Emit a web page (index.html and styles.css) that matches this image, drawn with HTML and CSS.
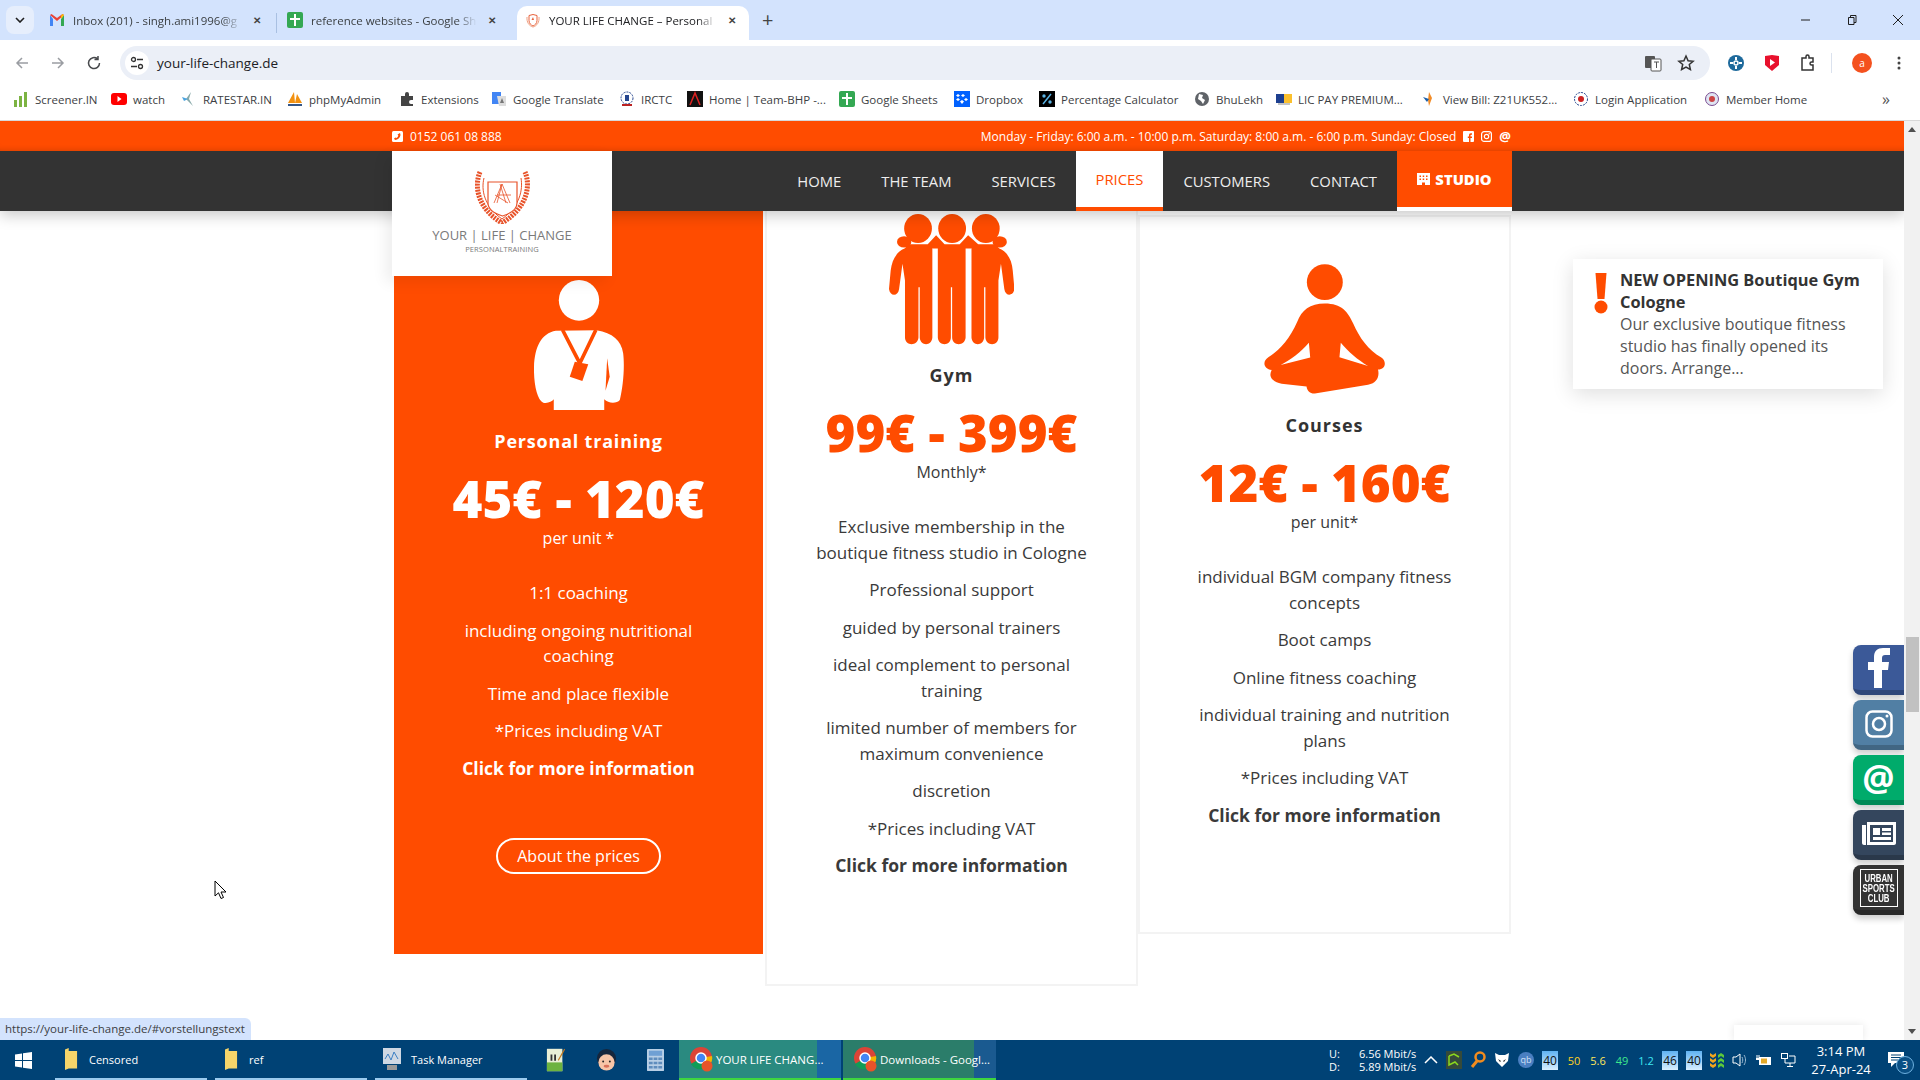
FILE: index.html
```html
<!DOCTYPE html>
<html lang="en">
<head>
<meta charset="utf-8">
<title>YOUR LIFE CHANGE</title>
<link rel="stylesheet" href="styles.css">
</head>
<body>
<div class="tabstrip">
  <div class="tabmenu"><svg width="10" height="6" viewBox="0 0 10 6"><path d="M1 1l4 4 4-4" fill="none" stroke="#1f1f1f" stroke-width="1.6"/></svg></div>
  <div class="tab tab-a"><svg class="fav" viewBox="0 0 16 16"><path d="M1 3v11h3V7z" fill="#4285f4"/><path d="M15 3v11h-3V7z" fill="#34a853"/><path d="M1 3l7 6 7-6-1.500-1L8 6 2.500 2z" fill="#ea4335"/><path d="M12 7l3-4-1.500-1L12 3.500z" fill="#fbbc04"/></svg><span class="tabtext">Inbox (201) - singh.ami1996@g</span><span class="tabx">✕</span></div>
  <div class="tabsep"></div>
  <div class="tab tab-b"><svg class="fav" viewBox="0 0 16 16"><rect width="16" height="16" rx="2" fill="#34a853"/><path d="M7 2h2v4h4v2H9v6H7V8H3V6h4z" fill="#fff"/></svg><span class="tabtext">reference websites - Google Sh</span><span class="tabx">✕</span></div>
  <div class="tab tab-active"><svg class="fav" viewBox="0 0 16 16"><path d="M8 2.500l4 1v5c0 3-2 4.500-4 5.500-2-1-4-2.500-4-5.500v-5z" fill="none" stroke="#e8623c" stroke-width="1"/><path d="M2 5c-.500 5 2 9 6 10 4-1 6.500-5 6-10" fill="none" stroke="#f0a080" stroke-width="1"/><path d="M8 5l1 3H6.500z" fill="#e8623c"/></svg><span class="tabtext">YOUR LIFE CHANGE – Personal</span><span class="tabx">✕</span></div>
  <div class="newtab">+</div>
  <div class="winctl">
    <svg width="12" height="12" viewBox="0 0 12 12"><path d="M1 6h9" stroke="#1f1f1f"/></svg>
    <svg width="12" height="12" viewBox="0 0 12 12"><path d="M2.500 3.500h5.500v7H2.500zM4.500 3.500V1.500h5.500v7H8" fill="none" stroke="#1f1f1f"/></svg>
    <svg width="12" height="12" viewBox="0 0 12 12"><path d="M1 1l10 10M11 1L1 11" stroke="#1f1f1f"/></svg>
  </div>
</div>
<div class="toolbar">
  <svg class="navbtn" viewBox="0 0 16 16"><path d="M14 8H3M8 3L3 8l5 5" fill="none" stroke="#9a9da2" stroke-width="1.500"/></svg>
  <svg class="navbtn" viewBox="0 0 16 16"><path d="M2 8h11M8 3l5 5-5 5" fill="none" stroke="#9a9da2" stroke-width="1.500"/></svg>
  <svg class="navbtn" viewBox="0 0 16 16"><path d="M13.500 8A5.500 5.500 0 1 1 11.500 3.800M12 1v3.500H8.500" fill="none" stroke="#47494c" stroke-width="1.500"/></svg>
  <div class="omnibox">
    <span class="tune"><svg width="14" height="14" viewBox="0 0 14 14"><circle cx="3.500" cy="3.500" r="2" fill="none" stroke="#333" stroke-width="1.300"/><path d="M7 3.500h6M1 10.500h6" stroke="#333" stroke-width="1.300"/><circle cx="10.500" cy="10.500" r="2" fill="none" stroke="#333" stroke-width="1.300"/></svg></span>
    <span class="url">your-life-change.de</span>
    <svg class="omni-ico" viewBox="0 0 18 18"><rect x="1" y="2" width="10" height="12" rx="1" fill="#555"/><rect x="7" y="5" width="10" height="12" rx="1" fill="#fff" stroke="#555"/><path d="M10 8h5M12.500 8v6" stroke="#555"/></svg>
    <svg class="omni-ico omni-star" viewBox="0 0 18 18"><path d="M9 2l2.100 4.700 5 .500-3.800 3.300 1.100 5L9 13l-4.400 2.500 1.100-5L1.900 7.200l5-.500z" fill="none" stroke="#333" stroke-width="1.500"/></svg>
  </div>
  <div class="tools">
    <svg class="tool" viewBox="0 0 18 18"><circle cx="9" cy="9" r="8" fill="#1e6a9c"/><circle cx="9" cy="9" r="2" fill="#1e6a9c" stroke="#fff" stroke-width="1.500"/><path d="M9 3v3M9 12v3M3 9h3M12 9h3" stroke="#fff" stroke-width="2"/></svg>
    <svg class="tool" viewBox="0 0 18 18"><path d="M2 2l7-1 7 1v9l-7 6-7-6z" fill="#e8112d"/><path d="M7 5l5 3.500L7 12z" fill="#fff"/></svg>
    <svg class="tool" viewBox="0 0 18 18"><path d="M3 4h4V2.500a1.500 1.500 0 0 1 3 0V4h4v4h-1.500a1.500 1.500 0 0 0 0 3H14v5H3z" fill="none" stroke="#333" stroke-width="1.500"/></svg>
    <span class="toolsep"></span>
    <span class="avatar">a</span>
    <svg class="kebab" viewBox="0 0 4 16"><circle cx="2" cy="3" r="1.500" fill="#444"/><circle cx="2" cy="8" r="1.500" fill="#444"/><circle cx="2" cy="13" r="1.500" fill="#444"/></svg>
  </div>
</div>
<div class="bookmarks">
  <span class="bm"><svg class="fav" viewBox="0 0 16 16"><path d="M1 9h3v7H1zM6 5h3v11H6zM11 1h3v15h-3z" fill="#7cb342"/></svg>Screener.IN</span>
  <span class="bm"><svg class="fav" viewBox="0 0 16 16"><rect y="2" width="16" height="12" rx="3" fill="#f00"/><path d="M6.500 5l4 3-4 3z" fill="#fff"/></svg>watch</span>
  <span class="bm"><svg class="fav" viewBox="0 0 16 16"><path d="M10 1L5 8l7 7-4-7z" fill="#8aa"/><path d="M1 6l6 2-4 2z" fill="#4aa3df"/></svg>RATESTAR.IN</span>
  <span class="bm"><svg class="fav" viewBox="0 0 16 16"><path d="M1 12L7 1l1 11zM8 12L10 3l5 9z" fill="#f29111"/><path d="M1 13h14v2H1z" fill="#34578a"/></svg>phpMyAdmin</span>
  <span class="bm"><svg class="fav" viewBox="0 0 16 16"><path d="M2 5h4V3a2 2 0 0 1 4 0v2h4v4h-2a2 2 0 0 0 0 4h2v2H2z" fill="#444"/></svg>Extensions</span>
  <span class="bm"><svg class="fav" viewBox="0 0 16 16"><path d="M1 1h9v12H1z" fill="#4285f4"/><path d="M6 5h9v10H8z" fill="#ddd"/><path d="M11 7l2 5h-4z" fill="#777"/></svg>Google Translate</span>
  <span class="bm"><svg class="fav" viewBox="0 0 16 16"><circle cx="8" cy="7" r="6" fill="none" stroke="#26468e" stroke-dasharray="2 1"/><path d="M6 4h4v6H6z" fill="#26468e"/><path d="M3 14h10" stroke="#b22" stroke-width="2"/></svg>IRCTC</span>
  <span class="bm"><svg class="fav" viewBox="0 0 16 16"><rect width="16" height="16" fill="#111"/><path d="M3 14L8 2l5 12" fill="none" stroke="#d22" stroke-width="1.500"/></svg>Home | Team-BHP -...</span>
  <span class="bm"><svg class="fav" viewBox="0 0 16 16"><rect width="16" height="16" rx="2" fill="#34a853"/><path d="M7 2h2v4h4v2H9v6H7V8H3V6h4z" fill="#fff"/></svg>Google Sheets</span>
  <span class="bm"><svg class="fav" viewBox="0 0 16 16"><rect width="16" height="16" fill="#0061fe"/><path d="M4 3l2 1.500L4 6 2 4.500zM9 3l2 1.500L9 6 7 4.500zM4 7l2 1.500L4 10 2 8.500zM12 7l2 1.500-2 1.500-2-1.500zM8 9l2 1.500L8 13l-2-2.500z" fill="#fff"/></svg>Dropbox</span>
  <span class="bm"><svg class="fav" viewBox="0 0 16 16"><rect width="16" height="16" fill="#000"/><path d="M12 3L4 13" stroke="#5ab4e5" stroke-width="1.500"/><circle cx="5" cy="5" r="1.700" fill="#5ab4e5"/><circle cx="11" cy="11" r="1.700" fill="#5ab4e5"/></svg>Percentage Calculator</span>
  <span class="bm"><svg class="fav" viewBox="0 0 16 16"><circle cx="8" cy="8" r="7" fill="#5f6368"/><path d="M5 3l4 1-1 3 3 2-2 4-2-3-3-2z" fill="#fff"/></svg>BhuLekh</span>
  <span class="bm"><svg class="fav" viewBox="0 0 16 16"><rect y="3" width="16" height="9" fill="#1d3f8f"/><rect x="8" y="3" width="8" height="9" fill="#fbc02d"/><path d="M2 13h12" stroke="#888"/></svg>LIC PAY PREMIUM...</span>
  <span class="bm"><svg class="fav" viewBox="0 0 16 16"><path d="M8 1l3 6-3 8-1-6z" fill="#f28c28"/><path d="M2 6l6 2-2 3z" fill="#1c5fa8"/></svg>View Bill: Z21UK552...</span>
  <span class="bm"><svg class="fav" viewBox="0 0 16 16"><circle cx="8" cy="8" r="6.500" fill="#fff" stroke="#26468e" stroke-dasharray="2 1"/><circle cx="8" cy="8" r="3" fill="#c22"/></svg>Login Application</span>
  <span class="bm"><svg class="fav" viewBox="0 0 16 16"><circle cx="8" cy="8" r="6.500" fill="#dfe5f3" stroke="#7a4b8f"/><circle cx="8" cy="8" r="3" fill="#c44"/></svg>Member Home</span>
  <span class="bm-more">»</span>
</div>

<div class="viewport">
  <div class="page">
    <main class="pricing">
      <section class="card card-orange">
        <svg class="icon icon-pt" viewBox="363 480 214 390" preserveAspectRatio="none">
          <ellipse cx="470" cy="541" rx="48" ry="61" fill="#fff"/>
          <path d="M415 632C380 640 365 680 363 740C362 790 370 840 385 848C395 851 405 846 410 838V870H530V838C540 851 560 851 567 840C575 800 579 740 575 700C570 660 550 640 512 631Z" fill="#fff"/>
          <path d="M431 630L472 730M510 630L472 730" stroke="#ff4c00" stroke-width="9" fill="none"/>
          <path d="M460 725L492 733L478 783L448 770Z" fill="#ff4c00"/>
          <path d="M537 715L543 770L533 812Z" fill="#ff4c00"/>
        </svg>
        <h2 class="title title-pt">Personal training</h2>
        <div class="price">45€ - 120€</div>
        <div class="unit">per unit *</div>
        <p>1:1 coaching</p>
        <p>including ongoing nutritional coaching</p>
        <p>Time and place flexible</p>
        <p>*Prices including VAT</p>
        <p class="more">Click for more information</p>
        <a class="btn" href="#">About the prices</a>
      </section>
      <section class="card card-gym">
        <svg class="icon icon-gym" viewBox="1208 282 297 390" preserveAspectRatio="none">
          <g fill="#ff4c00">
            <ellipse cx="1277" cy="325" rx="33" ry="43"/><ellipse cx="1358" cy="325" rx="33" ry="43"/><ellipse cx="1438" cy="325" rx="33" ry="43"/>
            <circle cx="1244" cy="365" r="17"/><circle cx="1471" cy="365" r="17"/>
            <path d="M1245 385C1225 395 1215 420 1212 450L1208 505C1210 528 1230 528 1232 505L1240 430L1246 480V650C1246 676 1277 676 1278 650V500H1281V650C1282 676 1310 676 1311 650V385L1300 372H1256Z"/>
            <path d="M1300 372L1320 345L1340 372H1376L1396 345L1420 372V385H1390V650C1389 676 1358 676 1358 650V500H1355V650C1355 676 1325 676 1324 650V385H1300Z"/>
            <path d="M1470 385C1490 395 1500 420 1502 450L1506 505C1504 528 1484 528 1482 505L1474 430L1468 480V650C1468 676 1438 676 1437 650V500H1434V650C1433 676 1405 676 1404 650V385L1415 372H1460Z"/>
          </g>
        </svg>
        <h2 class="title title-gym">Gym</h2>
        <div class="price">99€ - 399€</div>
        <div class="unit">Monthly*</div>
        <p>Exclusive membership in the boutique fitness studio in Cologne</p>
        <p>Professional support</p>
        <p>guided by personal trainers</p>
        <p>ideal complement to personal training</p>
        <p>limited number of members for maximum convenience</p>
        <p>discretion</p>
        <p>*Prices including VAT</p>
        <p class="more">Click for more information</p>
      </section>
      <section class="card card-courses">
        <svg class="icon icon-yoga" viewBox="672 432 364 390">
          <circle cx="855" cy="486" r="54" fill="#ff4c00"/>
          <path fill="#ff4c00" fill-rule="evenodd" d="M855 550C905 550 925 575 940 610C960 655 985 690 1025 713C1042 725 1038 748 1015 749C1020 770 1012 790 985 795L825 821C812 822 802 815 800 800L725 792C695 785 685 770 695 750C672 748 665 725 685 712C720 690 750 655 772 605C785 570 810 550 855 550ZM807 668C785 695 750 720 722 735L811 713ZM903 668L899 712L985 738C955 720 925 695 903 668Z"/>
        </svg>
        <h2 class="title title-courses">Courses</h2>
        <div class="price">12€ - 160€</div>
        <div class="unit">per unit*</div>
        <p>individual BGM company fitness concepts</p>
        <p>Boot camps</p>
        <p>Online fitness coaching</p>
        <p>individual training and nutrition plans</p>
        <p>*Prices including VAT</p>
        <p class="more">Click for more information</p>
      </section>
    </main>

    <header class="header">
      <div class="topbar">
        <div class="wrap topbar-in">
          <span class="tb-phone"><svg width="11" height="11" viewBox="0 0 11 11"><rect width="11" height="11" rx="1.500" fill="#fff"/><path d="M8 2L8.500 4C8 7 6 8.500 3 9L2 7.500L3.500 6.500L4.500 7C5.500 6.500 6 5.500 6.300 4.500L5.500 3.500Z" fill="#ff4c00"/></svg>0152 061 08 888</span>
          <span class="tb-hours">Monday - Friday: 6:00 a.m. - 10:00 p.m. Saturday: 8:00 a.m. - 6:00 p.m. Sunday: Closed
            <svg width="11" height="11" viewBox="0 0 11 11"><rect width="11" height="11" rx="1" fill="#fff"/><path d="M7.500 11V7H9V5.500H7.500V4.500C7.500 4 7.800 3.700 8.300 3.700H9V2.200H7.800C6.500 2.200 6 3 6 4.200V5.500H4.800V7H6V11Z" fill="#ff4c00"/></svg>
            <svg width="11" height="11" viewBox="0 0 11 11"><rect x=".6" y=".6" width="9.800" height="9.800" rx="2.500" fill="none" stroke="#fff" stroke-width="1.200"/><circle cx="5.500" cy="5.500" r="2.200" fill="none" stroke="#fff" stroke-width="1.200"/><circle cx="8.200" cy="2.800" r=".7" fill="#fff"/></svg>
            <b class="tb-at">@</b></span>
        </div>
      </div>
      <nav class="navbar">
        <div class="wrap nav-in">
          <a class="logo" href="#">
            <svg class="crest" viewBox="0 0 55 54">
              <path d="M5 2C-1 16 2 38 27 53C52 38 56 16 50 2" fill="none" stroke="#e8532a" stroke-width="5" stroke-dasharray="2 1"/>
              <path d="M9 8C6 20 9 36 27 49C45 36 48 20 46 8" fill="none" stroke="#e8532a" stroke-width="1"/>
              <path d="M13 12H42V33C42 40 34 44 27.500 46C21 44 13 40 13 33Z" fill="#fff" stroke="#e8532a" stroke-width="1.200"/>
              <path d="M19 33L27 14L35 33M22 25H36M20 25L33 33M27 14L22 33M25 14L31 33" fill="none" stroke="#e8532a" stroke-width=".8"/>
            </svg>
            <span class="logo-main">YOUR | LIFE | CHANGE</span>
            <span class="logo-sub">PERSONALTRAINING</span>
          </a>
          <a class="navlink" href="#">HOME</a>
          <a class="navlink" href="#">THE TEAM</a>
          <a class="navlink" href="#">SERVICES</a>
          <a class="navlink navlink-active" href="#">PRICES</a>
          <a class="navlink" href="#">CUSTOMERS</a>
          <a class="navlink" href="#">CONTACT</a>
          <a class="navlink navlink-studio" href="#"><svg width="13" height="12" viewBox="0 0 13 12"><path d="M0 0H13V12H8V9.500H5V12H0Z" fill="#fff"/><path d="M2.500 2.500h1.500v1.500H2.500zM5.700 2.500h1.500v1.500H5.700zM9 2.500h1.500v1.500H9zM2.500 5.500h1.500V7H2.500zM5.700 5.500h1.500V7H5.700zM9 5.500h1.500V7H9z" fill="#ff4c00"/></svg>STUDIO</a>
        </div>
      </nav>
    </header>

    <aside class="notice">
      <svg class="bang" width="14" height="41" viewBox="0 0 14 41"><path d="M1.500 0H12.500L10.500 26H3.500Z" fill="#ff4c00"/><circle cx="7" cy="34" r="6.500" fill="#ff4c00"/></svg>
      <div class="notice-text"><b>NEW OPENING Boutique Gym Cologne</b><br>Our exclusive boutique fitness studio has finally opened its doors. Arrange...</div>
    </aside>

    <div class="dock">
      <a class="dock-btn dock-fb"><svg width="22" height="40" viewBox="0 0 22 40"><path d="M6 40V22H0V14H6V9C6 3 9.500 0 15 0H22V7H17C15 7 14 8 14 10V14H21L20 22H14V40Z" fill="#fff"/></svg></a>
      <a class="dock-btn dock-ig"><svg width="28" height="28" viewBox="0 0 28 28"><rect x="1.500" y="1.500" width="25" height="25" rx="6" fill="none" stroke="#fff" stroke-width="2.500"/><circle cx="14" cy="14" r="6" fill="none" stroke="#fff" stroke-width="2.500"/><circle cx="22" cy="6" r="1.500" fill="#fff"/></svg></a>
      <a class="dock-btn dock-at"><span class="at">@</span></a>
      <a class="dock-btn dock-news"><svg width="34" height="23" viewBox="0 0 34 23"><path d="M0 3H4V23H2C1 23 0 22 0 21Z" fill="#fff"/><path d="M5 0H34V21C34 22 33 23 32 23H5ZM8 3V20H31V3Z" fill="#fff"/><path d="M11 6H18V13H11ZM20 6H29V9H20ZM20 10.500H29V13H20ZM11 15H29V18H11Z" fill="#fff"/></svg></a>
      <a class="dock-btn dock-usc"><span class="usc"><span class="usc-in">URBAN<br>SPORTS<br>CLUB</span></span></a>
    </div>

    <div class="chatstub"></div>

    <div class="scrollbar">
      <svg class="sb-arrow" width="8" height="5" viewBox="0 0 8 5"><path d="M4 0l4 5H0z" fill="#505050"/></svg>
      <div class="sb-track"><div class="sb-thumb"></div></div>
      <svg class="sb-arrow" width="8" height="5" viewBox="0 0 8 5"><path d="M4 5L0 0h8z" fill="#505050"/></svg>
    </div>

    <div class="status">https://your-life-change.de/#vorstellungstext</div>

    <svg class="cursor" width="14" height="20" viewBox="0 0 14 20"><path d="M1 1V16L4.500 12.800L7 18.500L9.500 17.500L7 12H12Z" fill="#fff" stroke="#000"/></svg>
  </div>
</div>

<footer class="taskbar">
  <svg class="win" width="17" height="17" viewBox="0 0 17 17"><path d="M0 2.500L7 1.500V8H0ZM8 1.300L17 0V8H8ZM0 9H7V15.500L0 14.500ZM8 9H17V17L8 15.700Z" fill="#fff"/></svg>
  <div class="task task-a"><svg class="task-ico" viewBox="0 0 14 30" preserveAspectRatio="none"><path d="M0 2L4 0V4H13V28H4L0 30Z" fill="#f6d56a"/></svg>Censored</div>
  <div class="task task-b"><svg class="task-ico" viewBox="0 0 14 30" preserveAspectRatio="none"><path d="M0 2L4 0V4H13V28H4L0 30Z" fill="#f6d56a"/></svg>ref</div>
  <div class="task task-c"><svg class="task-ico2" viewBox="0 0 20 24"><rect x="1" y="1" width="18" height="16" fill="#cfd8e3"/><path d="M3 12l3-5 3 6 3-8 4 7" fill="none" stroke="#3b7fc4"/><rect x="5" y="18" width="10" height="5" fill="#999"/></svg>Task Manager</div>
  <div class="quick">
    <svg width="20" height="24" viewBox="0 0 22 30" preserveAspectRatio="none"><path d="M1 1H18V29H1Z" fill="#e9efd6"/><path d="M1 18H18V29H1Z" fill="#6db33f"/><path d="M5 8h2v8H5zM9 8h2v8H9z" fill="#333"/><path d="M20 1l1 1-7 14-1-1z" fill="#c67a1e"/></svg>
    <svg width="21" height="23" viewBox="0 0 22 24"><circle cx="11" cy="10" r="10" fill="#16263c"/><circle cx="11" cy="14" r="8.500" fill="#f7c5a8"/><circle cx="7.500" cy="13" r="1" fill="#222"/><circle cx="14.500" cy="13" r="1" fill="#222"/><ellipse cx="11" cy="18" rx="3" ry="1.500" fill="#d9705a"/></svg>
    <svg width="17" height="22" viewBox="0 0 18 26" preserveAspectRatio="none"><rect width="18" height="26" rx="1" fill="#b8cfe6"/><rect x="2" y="2" width="14" height="6" fill="#6fa0d4"/><path d="M2 10h4v3H2zM7 10h4v3H7zM12 10h4v3h-4zM2 15h4v3H2zM7 15h4v3H7zM12 15h4v3h-4zM2 20h4v3H2zM7 20h4v3H7zM12 20h4v3h-4z" fill="#5f8dbd"/></svg>
  </div>
  <div class="chrome chrome-a"><svg class="crm" viewBox="0 0 24 26"><circle cx="12" cy="12" r="11" fill="#db4437"/><path d="M12 12L2 18A11 11 0 0 0 14 23Z" fill="#0f9d58"/><path d="M12 12L23 10A11 11 0 0 1 14 23Z" fill="#f4b400"/><circle cx="12" cy="12" r="5" fill="#4285f4" stroke="#fff" stroke-width="1.500"/><circle cx="18" cy="20" r="5.500" fill="#e8532a"/></svg><span class="crm-text">YOUR LIFE CHANG...</span></div>
  <div class="chrome chrome-b"><svg class="crm" viewBox="0 0 24 26"><circle cx="12" cy="12" r="11" fill="#db4437"/><path d="M12 12L2 18A11 11 0 0 0 14 23Z" fill="#0f9d58"/><path d="M12 12L23 10A11 11 0 0 1 14 23Z" fill="#f4b400"/><circle cx="12" cy="12" r="5" fill="#4285f4" stroke="#fff" stroke-width="1.500"/><circle cx="18" cy="20" r="5.500" fill="#e8532a"/></svg><span class="crm-text">Downloads - Googl...</span></div>
  <div class="tray">
    <div class="net"><span>U:</span><span>6.56 Mbit/s</span><span>D:</span><span>5.89 Mbit/s</span></div>
    <svg class="tr-up" width="14" height="8" viewBox="0 0 14 8"><path d="M1 7l6-6 6 6" fill="none" stroke="#fff" stroke-width="1.500"/></svg>
    <svg width="16" height="18" viewBox="0 0 16 18"><rect width="16" height="18" fill="#354a3a"/><path d="M3 5l5-2 5 3M3 5v9l6-3 3 3" fill="none" stroke="#8bd81e" stroke-width="1.500"/></svg>
    <svg width="16" height="18" viewBox="0 0 16 18"><circle cx="10" cy="6" r="4.500" fill="none" stroke="#f28c1e" stroke-width="2.500"/><path d="M7 10l-5 6" stroke="#f28c1e" stroke-width="3"/></svg>
    <svg width="16" height="16" viewBox="0 0 16 16"><path d="M1 1l4 2h6l4-2-1 8-6 6-6-6z" fill="#fff"/><path d="M4 7l3 2-1 1zM12 7l-3 2 1 1z" fill="#222"/></svg>
    <span class="qb">qb</span>
    <span class="tbox">40</span>
    <span class="tnum t-y">50</span><span class="tnum t-y2">5.6</span><span class="tnum t-g">49</span><span class="tnum t-c">1.2</span>
    <span class="tbox">46</span><span class="tbox">40</span>
    <svg width="14" height="18" viewBox="0 0 14 18"><path d="M0 2l3 2 3-2v3L3 7 0 5zM0 7l3 2 3-2v3L3 12 0 10zM0 12l3 2 3-2v3l-3 2-3-2z" fill="#f2a51e"/><path d="M8 4l3-2 3 2v3l-3-2-3 2zM8 9l3-2 3 2v3l-3-2-3 2zM8 14l3-2 3 2v3l-3-2-3 2z" fill="#5cc93a"/></svg>
    <svg width="16" height="16" viewBox="0 0 16 16"><path d="M1 5h3l4-3v12l-4-3H1z" fill="none" stroke="#fff"/><path d="M10 5c1 2 1 4 0 6M12 3c2 3 2 7 0 10" fill="none" stroke="#9bb9d1"/></svg>
    <svg width="16" height="14" viewBox="0 0 16 14"><rect x="3" y="4" width="12" height="8" fill="#fff"/><rect x="5" y="5.500" width="6" height="5" fill="#e3a92a"/><path d="M0 6h3" stroke="#fff" stroke-width="2"/><path d="M1 2v3M3 2v3" stroke="#fff"/></svg>
    <svg width="16" height="16" viewBox="0 0 16 16"><rect x="1.500" y="1.500" width="6" height="5" fill="none" stroke="#fff"/><path d="M5 7v4h10V4H9M10 11v3M7 14.500h6" fill="none" stroke="#fff"/></svg>
    <div class="clock"><span>3:14 PM</span><span>27-Apr-24</span></div>
    <div class="notif"><svg width="16" height="16" viewBox="0 0 16 16"><path d="M0 0H16V11H7L3 15V11H0Z" fill="#fff"/><path d="M3 3h10M3 5.500h10M3 8h7" stroke="#004275"/></svg><span class="notif-n">3</span></div>
  </div>
</footer>
</body>
</html>
```

FILE: styles.css
```css
* { box-sizing: border-box; }
html, body { margin: 0; height: 100%; overflow: hidden; }
body { width: 1920px; height: 1080px; display: flex; flex-direction: column; font-family: "Open Sans", "Liberation Sans", sans-serif; background: #fff; color: #333; }
a { color: inherit; text-decoration: none; }
svg { display: block; flex: none; }
.fav { width: 16px; height: 16px; }

/* tab strip */
.tabstrip { height: 40px; flex: none; background: #d3e3fd; display: flex; align-items: flex-end; padding-left: 6px; font-size: 12px; color: #3c4043; }
.tabmenu { width: 28px; height: 28px; margin-bottom: 6px; background: #e6eefc; border-radius: 8px; display: flex; align-items: center; justify-content: center; }
.tab { height: 34px; padding-bottom: 6px; display: flex; align-items: center; white-space: nowrap; }
.tab-a { width: 236px; margin-left: 6px; padding-left: 9px; padding-right: 12px; }
.tab-b { width: 234px; padding-left: 10px; padding-right: 12px; }
.tabsep { width: 1px; height: 20px; background: #a9c0e2; margin-bottom: 7px; }
.tab-active { width: 232px; margin-left: 6px; padding-left: 8px; padding-right: 10px; background: #fff; border-radius: 10px 10px 0 0; color: #202124; }
.tabtext { flex: 1; min-width: 0; margin-left: 8px; font-size: 11.5px; overflow: hidden; -webkit-mask-image: linear-gradient(90deg, #000 88%, transparent); mask-image: linear-gradient(90deg, #000 88%, transparent); }
.tabx { width: 14px; margin-left: 8px; text-align: center; font-size: 10px; font-weight: 700; color: #444; }
.newtab { margin: 0 0 5px 13px; font-size: 20px; line-height: 30px; color: #444; }
.winctl { margin-left: auto; height: 40px; display: flex; align-items: center; gap: 34px; padding-right: 16px; }

/* toolbar */
.toolbar { height: 44px; flex: none; background: #fff; border-radius: 8px 8px 0 0; display: flex; align-items: flex-start; padding: 6px 15px 0 14px; }
.navbtn { width: 16px; height: 16px; margin: 9px 20px 0 0; }
.omnibox { width: 1590px; height: 34px; margin-left: -2px; background: #ebeff7; border-radius: 17px; display: flex; align-items: center; padding: 0 15px 0 5px; }
.tune { width: 24px; height: 24px; background: #fff; border-radius: 50%; display: flex; align-items: center; justify-content: center; }
.url { margin-left: 8px; font-size: 13.5px; color: #202124; flex: 1; }
.omni-ico { width: 18px; height: 18px; }
.omni-star { margin-left: 15px; }
.tools { display: flex; align-items: center; height: 34px; padding-left: 17px; flex: 1; }
.tool { width: 18px; height: 18px; margin-right: 18px; }
.toolsep { width: 1px; height: 20px; background: #dbe2ee; margin-right: 20px; margin-left: -4px; }
.avatar { width: 20px; height: 20px; border-radius: 50%; background: #f4511e; color: #fff; font-size: 10px; display: flex; align-items: center; justify-content: center; }
.kebab { width: 4px; height: 16px; margin-left: 25px; }

/* bookmarks */
.bookmarks { height: 37px; flex: none; background: #fff; border-bottom: 1px solid #d8d8d8; display: grid; grid-template-columns: 98px 70px 106px 112px 92px 128px 68px 152px 115px 85px 155px 82px 145px 152px 131px 178px 20px; align-items: center; padding: 0 0 6px 13px; font-size: 11.5px; color: #3c4043; white-space: nowrap; }
.bm { display: flex; align-items: center; gap: 6px; overflow: hidden; }
.bm-more { font-size: 16px; color: #555; }

/* viewport */
.viewport { height: 919px; flex: none; position: relative; overflow: hidden; }
.page { height: 100%; position: relative; overflow: hidden; background: #fff; padding-right: 16px; }
.wrap { width: 1120px; margin: 0 auto; }

.header { position: absolute; left: 0; right: 16px; top: 0; box-shadow: 0 4px 14px rgba(0,0,0,.22); }
.topbar { height: 30px; background: #ff4c00; color: #fff; font-size: 12px; box-shadow: inset 0 -6px 6px -6px rgba(0,0,0,.2); }
.topbar-in { height: 100%; display: flex; align-items: center; justify-content: space-between; }
.tb-phone { display: flex; align-items: center; gap: 7px; }
.tb-hours { display: flex; align-items: center; gap: 7px; padding-right: 1px; }
.tb-at { font-size: 13px; line-height: 11px; }
.navbar { height: 60px; background: #333; }
.nav-in { height: 100%; display: flex; justify-content: flex-end; position: relative; }
.logo { position: absolute; left: 0; top: 0; width: 220px; height: 125px; background: #fff; display: flex; flex-direction: column; align-items: center; padding-top: 19px; color: #777; box-shadow: -6px 6px 14px rgba(0,0,0,.07); }
.crest { width: 55px; height: 54px; }
.logo-main { font-size: 13px; line-height: 18px; margin-top: 2px; color: #7a7a7a; }
.logo-sub { font-size: 7.5px; line-height: 11px; letter-spacing: .1px; color: #7a7a7a; }
.navlink { height: 60px; padding: 0 20px 1px; display: flex; align-items: center; font-size: 14.8px; color: #eee; }
.navlink-active { background: #fff; color: #ff4c00; border-bottom: 4px solid #ff4c00; padding-bottom: 0; }
.navlink-studio { width: 115px; justify-content: center; gap: 5px; background: #ff4c00; color: #fff; font-weight: 800; border-bottom: 4px solid #fff; padding: 0; }

/* pricing */
.pricing { width: 1119px; margin: 44px 0 0 392px; display: grid; grid-template-columns: repeat(3, 373px); align-items: start; font-size: 17px; text-align: center; }
.card { border: 2px solid #f3f3f3; padding: 47px 40px 0; color: #3a3a3a; }
.card p { margin: 0 0 12px; line-height: 25.5px; }
.card-orange { height: 791px; padding-top: 113px; background: #ff4c00; background-clip: padding-box; border-color: #fff; color: #fff; }
.card-gym { height: 821px; }
.card-courses { margin-top: 50px; height: 719px; }
.icon { margin: 0 auto; }
.icon-pt { width: 90px; height: 130px; }
.icon-gym { width: 125px; height: 131px; }
.icon-yoga { width: 121px; height: 130px; }
.title { margin: 19px 0 0; font-size: 18px; line-height: 26px; font-weight: 700; letter-spacing: 1px; color: #333; }
.title-gym { margin-top: 17px; }
.title-pt { margin-top: 18px; letter-spacing: .8px; color: #fff; }
.title-courses { margin-top: 18px; }
.price { margin-top: 18px; font-size: 51px; line-height: 53px; font-weight: 800; color: #ff4c00; white-space: nowrap; }
.card-orange .price { color: #fff; }
.unit { font-size: 16px; line-height: 26px; margin-bottom: 29px; }
.card .more { font-size: 17.5px; font-weight: 700; }
.btn { display: block; width: 165px; height: 36px; margin: 57px auto 0; border: 2px solid #fff; border-radius: 18px; font-size: 16px; line-height: 32px; color: #fff; }

/* notice */
.notice { position: absolute; left: 1573px; top: 138px; width: 310px; height: 130px; background: #fff; box-shadow: 0 5px 20px rgba(0,0,0,.13); display: flex; padding: 10px 10px 0 21px; font-size: 16px; line-height: 22px; color: #555; }
.bang { margin-top: 4px; }
.notice-text { margin-left: 12px; }
.notice-text b { font-size: 16.4px; color: #333; }

/* dock */
.dock { position: absolute; left: 1853px; top: 524px; width: 51px; display: flex; flex-direction: column; gap: 5px; }
.dock-btn { height: 50px; border-radius: 8px 0 0 8px; display: flex; align-items: center; justify-content: center; box-shadow: 0 4px 6px rgba(0,0,0,.2); color: #fff; }
.dock-fb { background: #3b5998; border-bottom: 5px solid #2f4779; }
.dock-ig { background: #517fa4; border-bottom: 5px solid #416683; }
.dock-ig svg { margin-top: 3px; }
.dock-at { background: #00ab6b; border-bottom: 5px solid #008956; }
.dock-news { background: #34465d; border-bottom: 5px solid #2a384a; }
.dock-news svg { margin-top: 1px; }
.dock-usc { background: #333; border-bottom: 5px solid #292929; }
.at { font-size: 36px; line-height: 40px; font-weight: 700; }
.usc { width: 38px; height: 38px; flex: none; border: 1px solid #fff; display: flex; align-items: center; justify-content: center; overflow: hidden; }
.usc-in { display: block; flex: none; font-family: "Liberation Sans", sans-serif; font-size: 11.5px; line-height: 10px; font-weight: 700; text-align: center; white-space: nowrap; transform: scaleX(.68); }

.chatstub { position: absolute; left: 1734px; bottom: 0; width: 129px; height: 15px; background: #fff; box-shadow: 0 0 8px rgba(0,0,0,.1); }

/* scrollbar */
.scrollbar { position: absolute; right: 0; top: 0; bottom: 0; width: 16px; background: #f1f1f1; display: flex; flex-direction: column; align-items: center; padding: 6px 0; }
.sb-track { flex: 1; width: 100%; padding: 0 1.500px; }
.sb-thumb { margin-top: 505px; height: 75px; background: #c1c1c1; }
.status { position: absolute; left: 0; bottom: 0; width: 251px; height: 22px; background: #d3e3fd; border-radius: 0 6px 0 0; font-size: 11.5px; line-height: 22px; padding-left: 5px; color: #3c4043; white-space: nowrap; }
.cursor { position: absolute; left: 214px; top: 759px; }

/* taskbar */
.taskbar { height: 40px; flex: none; background: #004275; display: flex; align-items: center; font-size: 11px; color: #fff; position: relative; }
.win { margin: 0 23px 0 15px; }
.task { width: 152px; height: 40px; display: flex; align-items: center; border-bottom: 2px solid #9ccbee; white-space: nowrap; margin-right: 8px; }
.task-ico { width: 13px; height: 22px; margin: 0 11px 0 10px; }
.task-ico2 { width: 20px; height: 24px; margin: 0 9px 0 7px; }
.quick { display: flex; align-items: center; gap: 30px; margin: 0 15px 0 11px; }
.chrome { height: 40px; display: flex; align-items: center; border-bottom: 2px solid #3fd63f; white-space: nowrap; font-size: 11.5px; }
.chrome-a { width: 162px; background: linear-gradient(90deg, #2a8a80 138px, #1a66a4 138px); }
.chrome-b { width: 153px; margin-left: 2px; background: linear-gradient(90deg, #2b7d6a 131px, #1a5a90 131px); }
.crm { width: 24px; height: 26px; margin: 0 3px 0 10px; }
.crm-text { flex: 1; min-width: 0; }
.tray { margin-left: auto; display: flex; align-items: center; height: 40px; }
.net { display: grid; grid-template-columns: 30px 58px; font-size: 11px; line-height: 13px; margin-right: 7px; white-space: nowrap; }
.tr-up { margin-right: 9px; }
.tray > svg { margin-right: 8px; }
.qb { width: 16px; height: 16px; border-radius: 50%; background: #4a7fc1; font-size: 9px; line-height: 16px; text-align: center; color: #cfe0f5; margin-right: 8px; }
.tbox { width: 16px; height: 19px; background: linear-gradient(#5fb2f2, #d9efff); color: #111; font-size: 12px; line-height: 19px; text-align: center; margin-right: 8px; }
.tnum { width: 16px; font-size: 11px; text-align: center; margin-right: 8px; }
.t-y { color: #ffd21e; } .t-y2 { color: #ffe85c; } .t-g { color: #3fe88c; } .t-c { color: #3fe8f2; }
.clock { width: 64px; margin: 0 15px 0 5px; display: flex; flex-direction: column; align-items: center; font-size: 13px; line-height: 18px; white-space: nowrap; }
.notif { width: 32px; height: 40px; position: relative; padding-top: 12px; }
.notif-n { position: absolute; left: 8px; top: 16px; width: 18px; height: 18px; border-radius: 50%; background: #0a4f84; border: 1px solid #6fb1e0; font-size: 11px; line-height: 16px; text-align: center; }
```
